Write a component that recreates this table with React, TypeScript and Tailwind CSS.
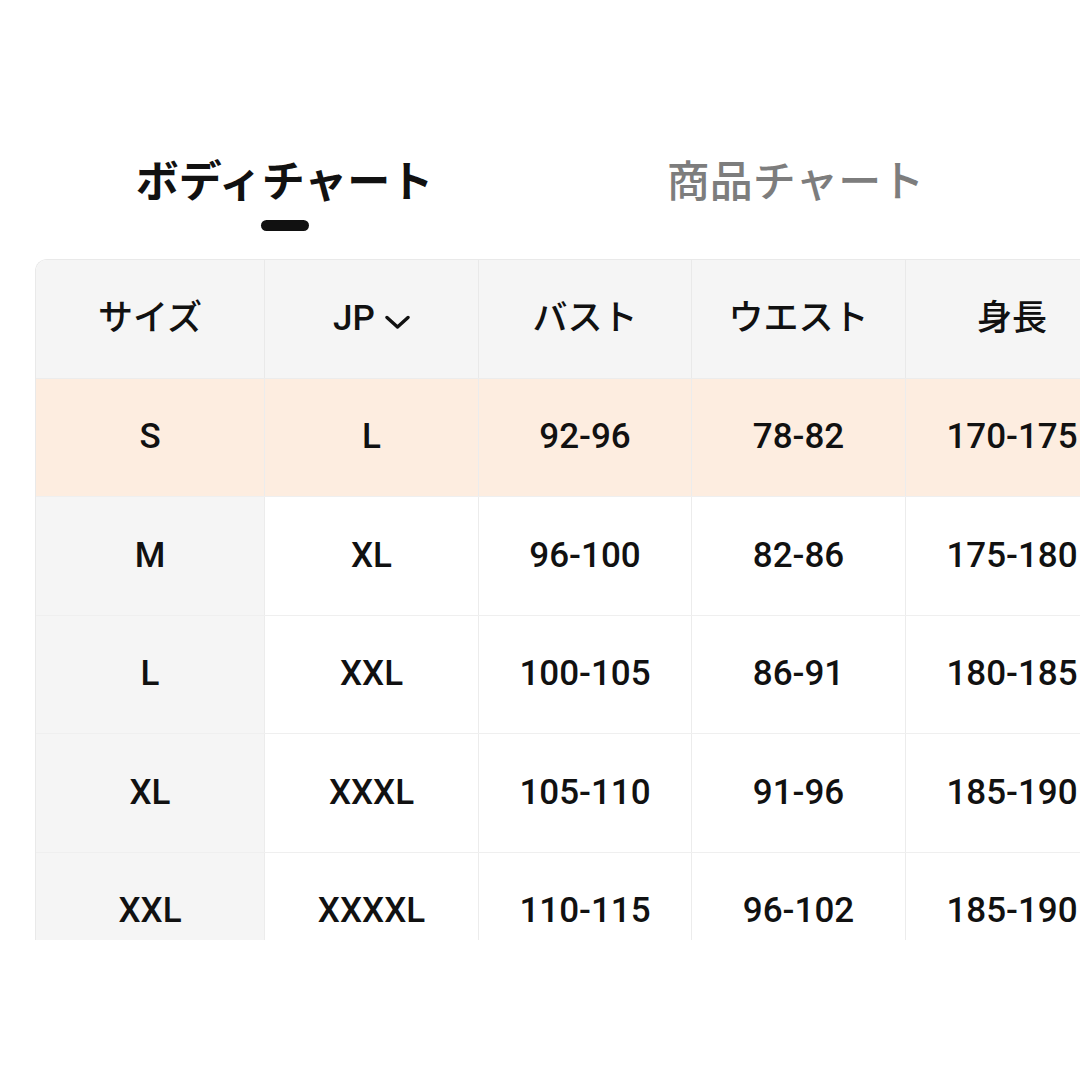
const rows = [
  ["S", "L", "92-96", "78-82", "170-175"],
  ["M", "XL", "96-100", "82-86", "175-180"],
  ["L", "XXL", "100-105", "86-91", "180-185"],
  ["XL", "XXXL", "105-110", "91-96", "185-190"],
  ["XXL", "XXXXL", "110-115", "96-102", "185-190"],
];

const widths = ["w-[229px]", "w-[214px]", "w-[213px]", "w-[214px]", "w-[213px]"];

export default function App() {
  return (
    <div
      className="w-[1080px] h-[1080px] bg-white overflow-hidden text-[#111]"
      style={{ fontFamily: "Roboto, 'Noto Sans CJK JP', sans-serif" }}
    >
      <div className="flex ml-[29px] pt-[150px]">
        <div className="w-[511px] flex flex-col items-center">
          <span className="text-[43px] font-bold leading-[64px]">ボディチャート</span>
          <div className="mt-[6px] w-[48px] h-[11px] rounded-full bg-[#111]" />
        </div>
        <div className="w-[511px] flex flex-col items-center">
          <span className="text-[43px] font-medium leading-[64px] text-[#7d7d7d]">商品チャート</span>
        </div>
      </div>

      <div className="ml-[35px] mt-[28px] h-[681px] overflow-hidden">
        <div className="w-[1083px] border-l border-t border-[#e9e9e9] rounded-tl-[12px] overflow-hidden">
          <div className="flex h-[118.5px] bg-[#f5f5f5] border-b border-[#ececec] text-[35px] font-medium">
            {["サイズ", "JP", "バスト", "ウエスト", "身長"].map((h, i) => (
              <div
                key={h}
                className={`${widths[i]} shrink-0 flex items-center justify-center border-r border-[#e9e9e9]`}
              >
                {h}
                {h === "JP" && (
                  <svg className="ml-[10px] mt-[8px]" width="25" height="15" viewBox="0 0 25 15" fill="none">
                    <path d="M2 2.5 L12.5 12 L23 2.5" stroke="#111" strokeWidth="3.4" strokeLinecap="round" strokeLinejoin="round" />
                  </svg>
                )}
              </div>
            ))}
          </div>
          {rows.map((r, ri) => (
            <div
              key={ri}
              className={`flex h-[118.5px] border-b border-[#efefef] text-[35px] font-medium ${
                ri === 0 ? "bg-[#fdede0]" : "bg-white"
              }`}
            >
              {r.map((c, ci) => (
                <div
                  key={ci}
                  className={`${widths[ci]} shrink-0 flex items-center justify-center border-r border-[#ececec] ${
                    ci === 0 && ri !== 0 ? "bg-[#f5f5f5]" : ""
                  }`}
                >
                  {c}
                </div>
              ))}
            </div>
          ))}
        </div>
      </div>
    </div>
  );
}
